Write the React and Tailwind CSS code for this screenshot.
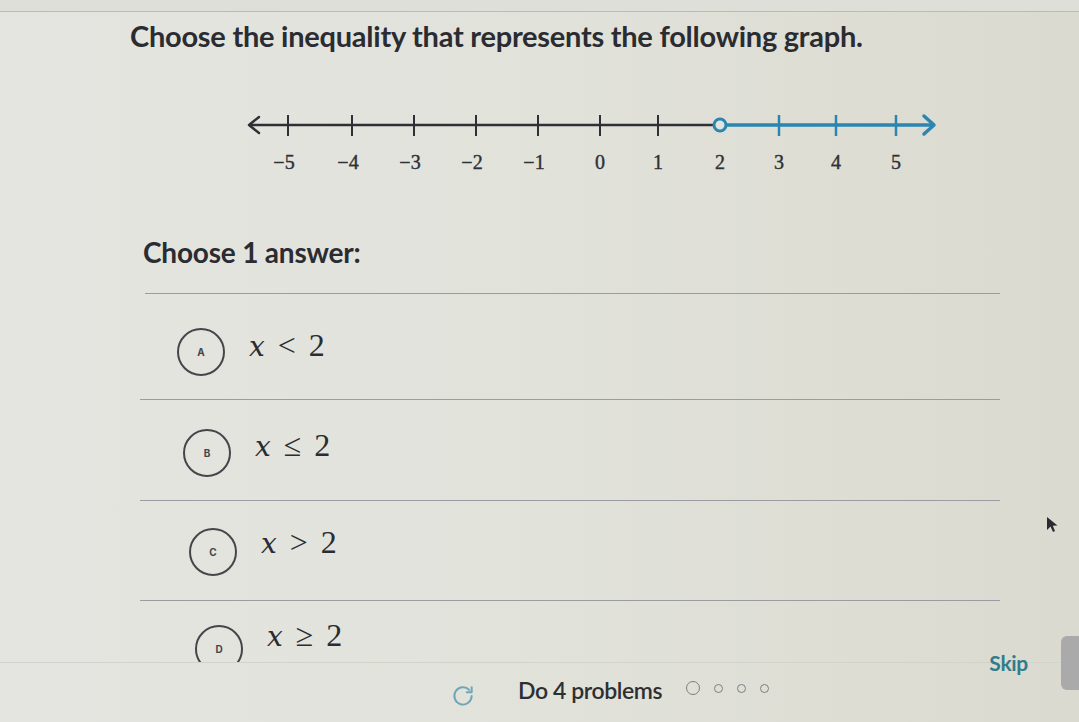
import React from "react";

const ticks = [288, 352, 414, 476, 538, 600, 658, 720, 779, 836, 896];
const labels = ["−5", "−4", "−3", "−2", "−1", "0", "1", "2", "3", "4", "5"];

function NumberLine() {
  const ox = 240;
  const oy = 100;
  const X = (x) => x - ox;
  const Y = (y) => y - oy;
  const lineY = 126;
  return (
    <svg width="710" height="85" viewBox="0 0 710 85" className="block">
      <line x1={X(249)} y1={Y(lineY)} x2={X(714)} y2={Y(lineY)} stroke="#2f3036" strokeWidth="2.5" />
      <polyline points={`${X(259)},${Y(lineY - 8)} ${X(249)},${Y(lineY)} ${X(259)},${Y(lineY + 8)}`} fill="none" stroke="#2f3036" strokeWidth="2.5" strokeLinecap="round" strokeLinejoin="round" />
      <line x1={X(726)} y1={Y(lineY)} x2={X(933)} y2={Y(lineY)} stroke="#2a86b1" strokeWidth="3.5" />
      <polyline points={`${X(924)},${Y(lineY - 9)} ${X(934)},${Y(lineY)} ${X(924)},${Y(lineY + 9)}`} fill="none" stroke="#2a86b1" strokeWidth="3.5" strokeLinecap="round" strokeLinejoin="round" />
      {ticks.map((t, i) =>
        i === 7 ? null : (
          <line key={t} x1={X(t)} y1={Y(lineY - 10)} x2={X(t)} y2={Y(lineY + 11)} stroke={i > 7 ? "#2a86b1" : "#2f3036"} strokeWidth={i > 7 ? 2.5 : 2} />
        )
      )}
      <circle cx={X(720)} cy={Y(lineY)} r="6" fill="#e2e3dc" stroke="#2a86b1" strokeWidth="3" />
      {ticks.map((t, i) => (
        <text key={"l" + t} x={X(t) - (i < 5 ? 4 : 0)} y={Y(170)} textAnchor="middle" fontFamily="'Liberation Serif', serif" fontSize="20" fill="#2f3036" stroke="#2f3036" strokeWidth="0.4">
          {labels[i]}
        </text>
      ))}
    </svg>
  );
}

function Choice({ letter, rel, ml, pt, tmt }) {
  return (
    <div className="flex items-start" style={{ marginLeft: ml, paddingTop: pt }}>
      <div className="w-[48px] h-[48px] rounded-full border-2 border-[#45464b] flex items-center justify-center shrink-0">
        <span className="text-[10px] font-bold text-[#45464b] font-['Inter',sans-serif]">{letter}</span>
      </div>
      <div className="ml-[24px] flex items-baseline text-[32px] leading-none text-[#2b2c31] font-['Liberation_Serif',serif]" style={{ marginTop: tmt }}>
        <span className="italic font-['DejaVu_Serif',serif] text-[28px]">x</span>
        <span className="mx-[13px]">{rel}</span>
        <span>2</span>
      </div>
    </div>
  );
}

export default function App() {
  return (
    <div className="relative w-[1079px] h-[722px] overflow-hidden bg-linear-to-r from-[#e4e5e0] via-[#e1e2da] to-[#dbdad0] font-['Lato',sans-serif] text-[#2b2c31]">
      <div className="h-[12px] bg-[#dddfd8] border-b border-[#b9bbb4]" />
      <div className="h-[650px] overflow-hidden flex flex-col">
        <h1 className="ml-[130px] mt-[7px] text-[29px] leading-[34px] font-bold tracking-[-0.25px]">
          Choose the inequality that represents the following graph.
        </h1>
        <div className="ml-[240px] mt-[46px]">
          <NumberLine />
        </div>
        <div className="ml-[143px] mt-[51px] text-[28px] leading-[34px] font-bold tracking-[-0.2px]">Choose 1 answer:</div>
        <div className="ml-[145px] mr-[79px] mt-[24px] border-t-[1.5px] border-[#9a9ca3]" />
        <div className="h-[106px] shrink-0 ml-[140px] mr-[79px] border-b-[1.5px] border-[#9a9ca3]">
          <Choice letter="A" rel="<" ml={37} pt={34} tmt={1} />
        </div>
        <div className="h-[101px] shrink-0 ml-[140px] mr-[79px] border-b-[1.5px] border-[#9a9ca3]">
          <Choice letter="B" rel="≤" ml={43} pt={29} tmt={0} />
        </div>
        <div className="h-[100px] shrink-0 ml-[140px] mr-[79px] border-b-[1.5px] border-[#9a9ca3]">
          <Choice letter="C" rel=">" ml={49} pt={27} tmt={-2} />
        </div>
        <div className="h-[100px] shrink-0 ml-[140px] mr-[79px]">
          <Choice letter="D" rel="≥" ml={55} pt={24} tmt={-6} />
        </div>
      </div>
      <div className="h-[60px] border-t border-[#d2d4cc] flex items-start">
        <svg width="26" height="26" viewBox="0 0 24 24" className="ml-[450px] mt-[20px]" fill="none" stroke="#6fa6b6" strokeWidth="1.8" strokeLinecap="round" strokeLinejoin="round">
          <path d="M20 12a8 8 0 1 1-2.3-5.7" />
          <path d="M20 4v4.5h-4.5" />
        </svg>
        <span className="ml-[42px] mt-[13px] text-[23px] leading-[28px] font-semibold text-[#2e2f33] tracking-[-0.4px]">Do 4 problems</span>
        <div className="ml-[24px] mt-[18px] flex items-center gap-[14px]">
          <div className="w-[14px] h-[14px] rounded-full border-[1.5px] border-[#7c7e84]" />
          <div className="w-[9px] h-[9px] rounded-full border-[1.5px] border-[#7c7e84]" />
          <div className="w-[9px] h-[9px] rounded-full border-[1.5px] border-[#7c7e84]" />
          <div className="w-[9px] h-[9px] rounded-full border-[1.5px] border-[#7c7e84]" />
        </div>
        <div className="ml-auto -mt-[27px] flex items-center">
          <span className="text-[21px] font-bold text-[#2f7d8c] tracking-[-0.3px]">Skip</span>
          <div className="ml-[33px] w-[18px] h-[54px] rounded-l-[6px] bg-[#a9aaa9]" />
        </div>
      </div>
      <svg className="absolute left-[1046px] top-[516px]" width="14" height="18" viewBox="0 0 14 18">
        <path d="M1 1 L1 14 L4.5 10.5 L7 16 L9 15 L6.8 9.8 L11.5 9.5 Z" fill="#2b2c31" />
      </svg>
    </div>
  );
}
